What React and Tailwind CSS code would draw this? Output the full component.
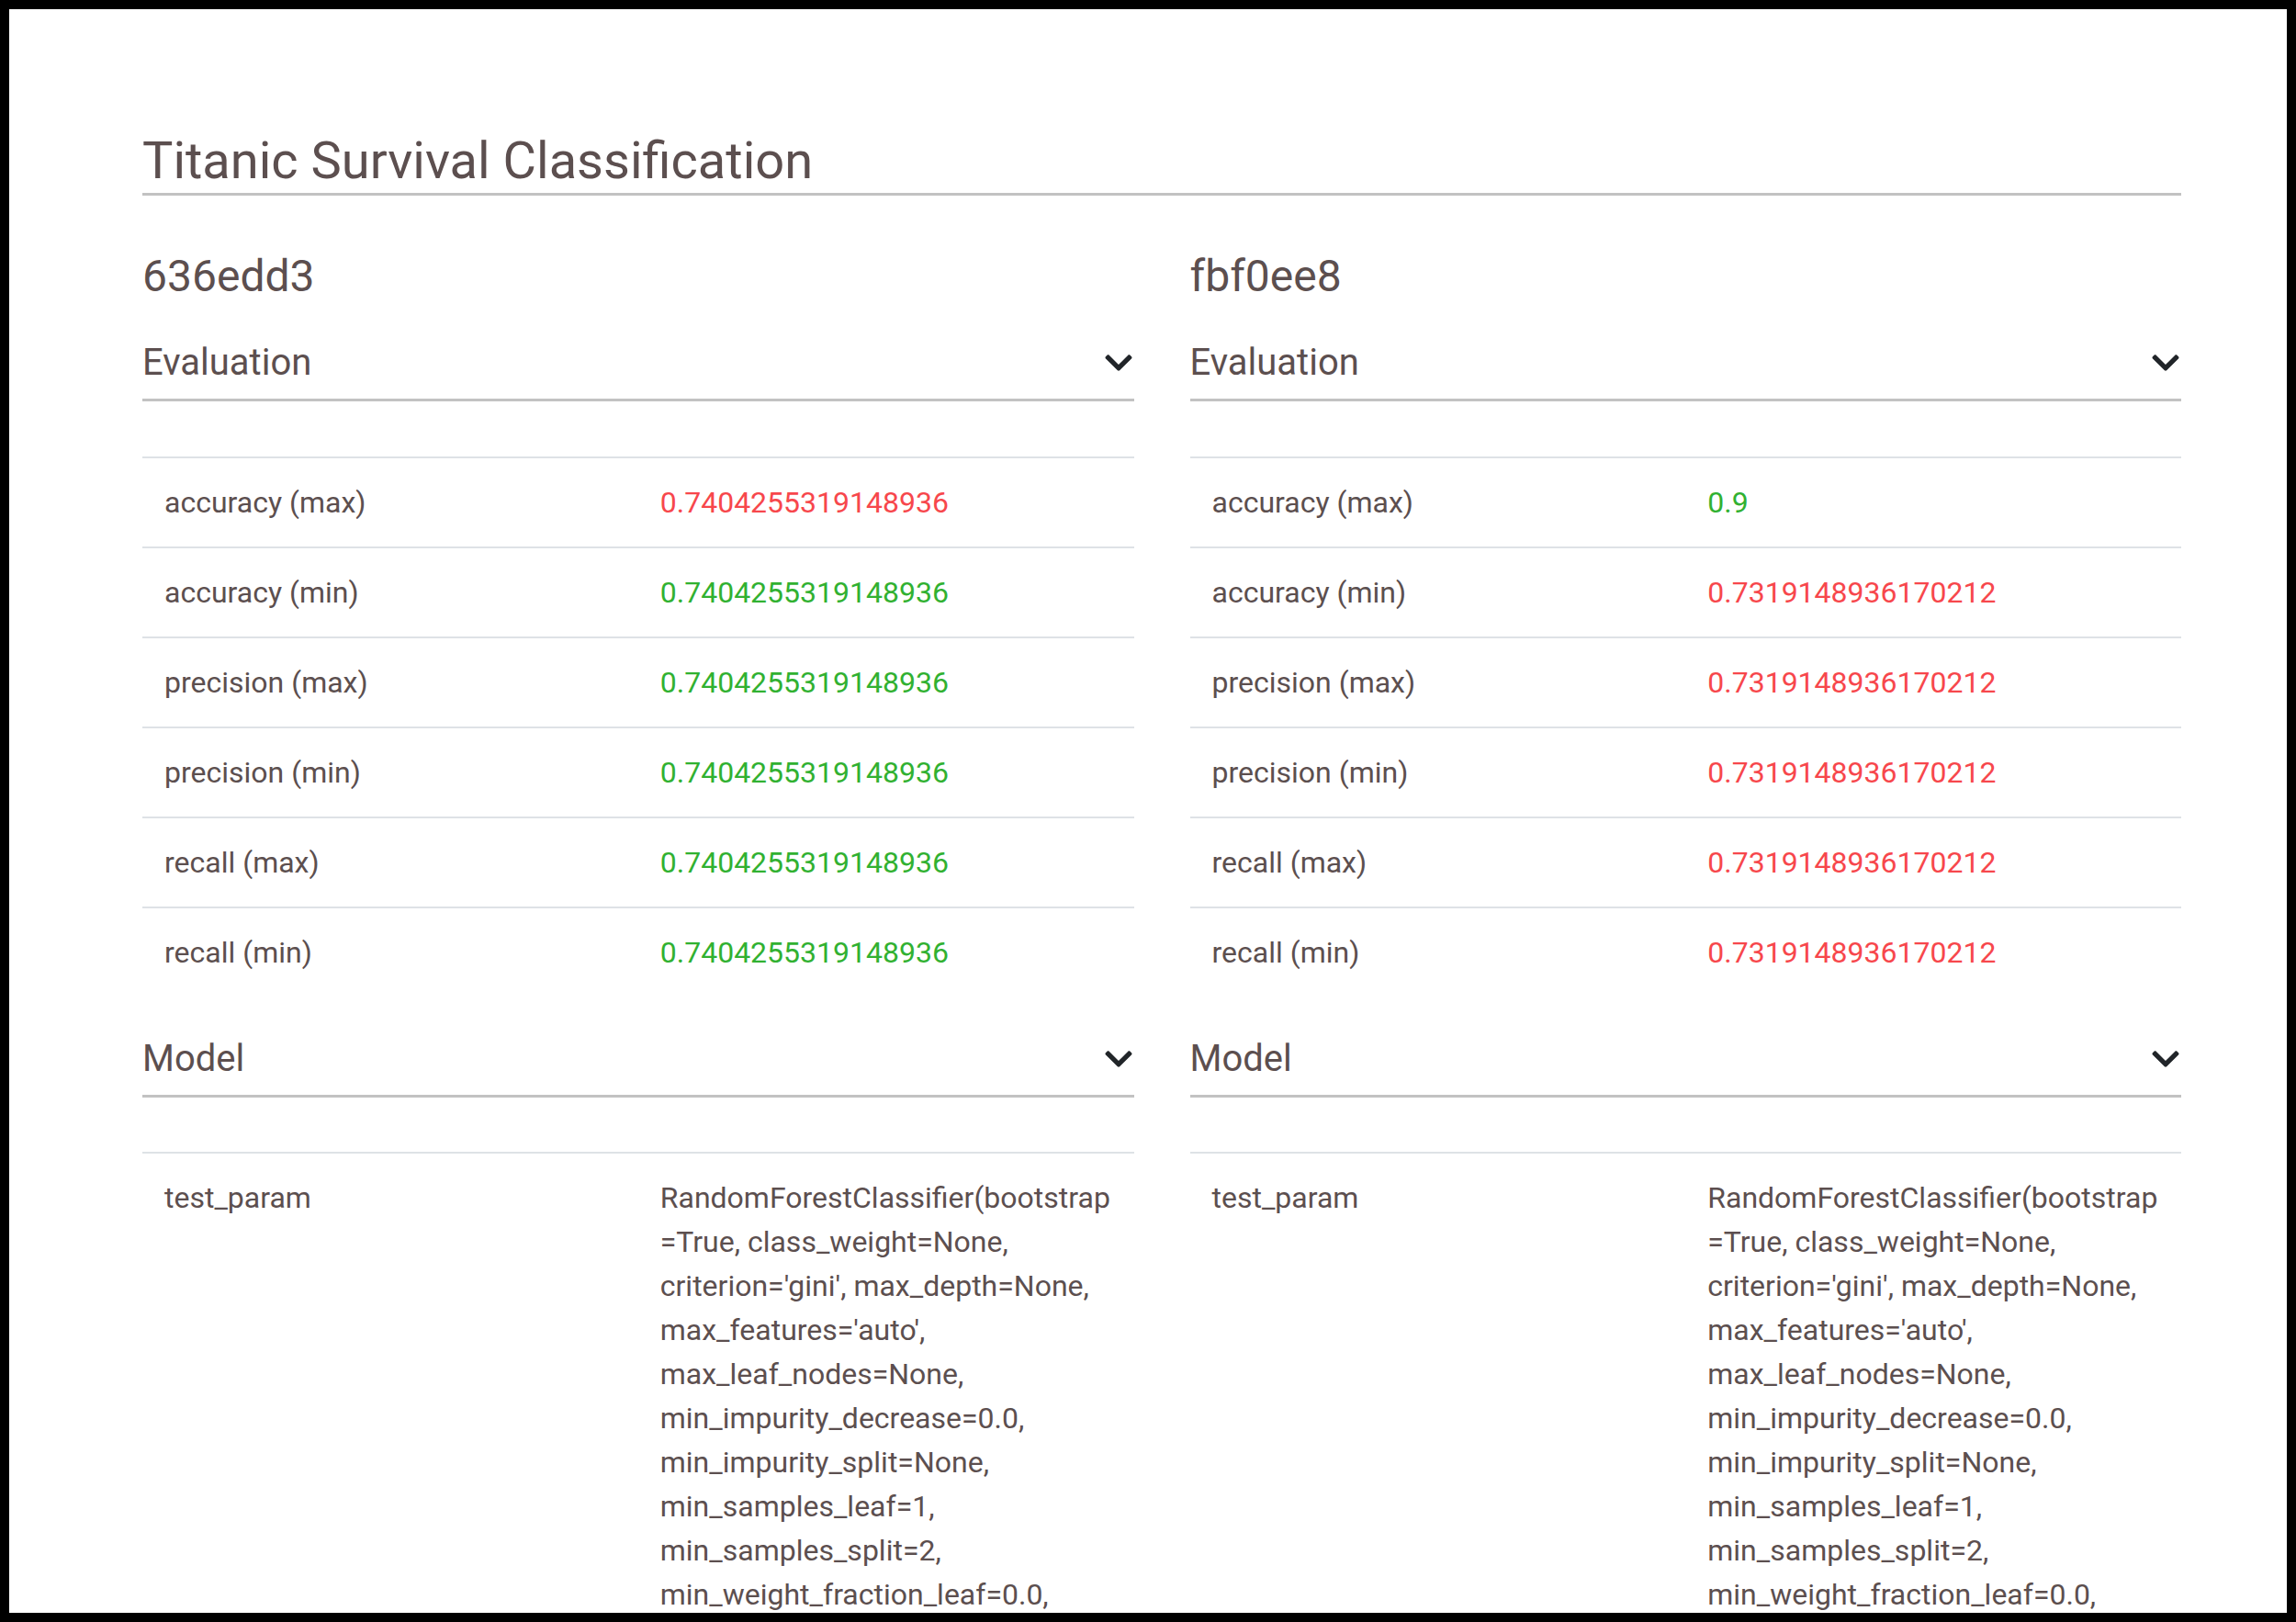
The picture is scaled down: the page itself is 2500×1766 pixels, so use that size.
import { FaChevronDown } from 'react-icons/fa'

const RUNS = [
  {
    hash: '636edd3',
    metrics: [
      { name: 'accuracy (max)', value: '0.7404255319148936', good: false },
      { name: 'accuracy (min)', value: '0.7404255319148936', good: true },
      { name: 'precision (max)', value: '0.7404255319148936', good: true },
      { name: 'precision (min)', value: '0.7404255319148936', good: true },
      { name: 'recall (max)', value: '0.7404255319148936', good: true },
      { name: 'recall (min)', value: '0.7404255319148936', good: true },
    ],
  },
  {
    hash: 'fbf0ee8',
    metrics: [
      { name: 'accuracy (max)', value: '0.9', good: true },
      { name: 'accuracy (min)', value: '0.7319148936170212', good: false },
      { name: 'precision (max)', value: '0.7319148936170212', good: false },
      { name: 'precision (min)', value: '0.7319148936170212', good: false },
      { name: 'recall (max)', value: '0.7319148936170212', good: false },
      { name: 'recall (min)', value: '0.7319148936170212', good: false },
    ],
  },
]

// only the lines that fit above the bottom of the window
const MODEL_LINES = [
  'RandomForestClassifier(bootstrap',
  '=True, class_weight=None,',
  "criterion='gini', max_depth=None,",
  "max_features='auto',",
  'max_leaf_nodes=None,',
  'min_impurity_decrease=0.0,',
  'min_impurity_split=None,',
  'min_samples_leaf=1,',
  'min_samples_split=2,',
  'min_weight_fraction_leaf=0.0,',
]

function SectionHeader({ title }) {
  return (
    <div className="flex items-center justify-between border-b-[3px] border-[#c2c2c2] pb-[15px]">
      <h5 className="text-[40px] leading-[48px]">{title}</h5>
      <FaChevronDown size={34} color="#212529" />
    </div>
  )
}

function Row({ label, children }) {
  return (
    <div className="grid grid-cols-2 border-t-2 border-[#dee2e6] text-[32px] leading-[48px]">
      <div className="p-[24px]">{label}</div>
      <div className="p-[24px]">{children}</div>
    </div>
  )
}

function RunColumn({ run }) {
  return (
    <div className="min-w-0">
      <h4 className="text-[48px] leading-[58px]">{run.hash}</h4>
      <div className="mt-[41px]">
        <SectionHeader title="Evaluation" />
        <div className="mt-[60px]">
          {run.metrics.map((m) => (
            <Row key={m.name} label={m.name}>
              <span className={m.good ? 'text-[#31b131]' : 'text-[#f7474c]'}>{m.value}</span>
            </Row>
          ))}
        </div>
      </div>
      <div className="mt-[44px]">
        <SectionHeader title="Model" />
        <div className="mt-[59px]">
          <Row label="test_param">
            {MODEL_LINES.map((line) => (
              <div key={line} className="whitespace-nowrap">{line}</div>
            ))}
          </Row>
        </div>
      </div>
    </div>
  )
}

export default function App() {
  return (
    <div className="h-[1766px] bg-black p-[10px]">
      <div className="h-full overflow-hidden bg-white font-['Roboto',sans-serif] text-[#5c4f4f]">
        <div className="ml-[145px] w-[2220px] pt-[131px]">
          <h2 className="border-b-[3px] border-[#c2c2c2] text-[56px] leading-[69px]">Titanic Survival Classification</h2>
          <div className="mt-[59px] grid grid-cols-2 gap-x-[61px]">
            {RUNS.map((run) => (
              <RunColumn key={run.hash} run={run} />
            ))}
          </div>
        </div>
      </div>
    </div>
  )
}
